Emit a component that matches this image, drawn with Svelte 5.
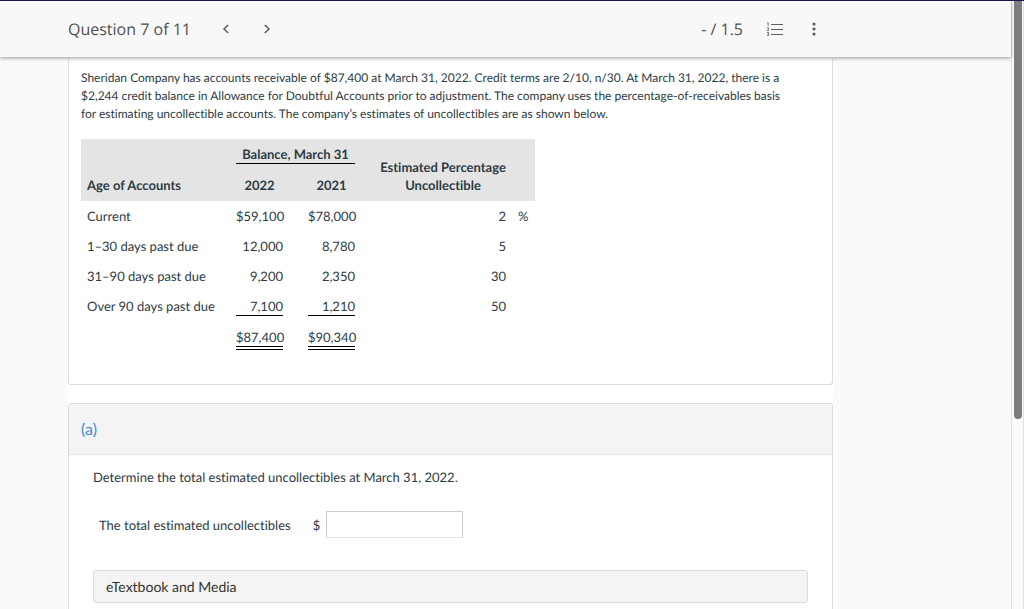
<script>
  const rows = [
    { label: 'Current', y2022: '$59,100', y2021: '$78,000', rate: '2', unit: '%' },
    { label: '1–30 days past due', y2022: '12,000', y2021: '8,780', rate: '5' },
    { label: '31–90 days past due', y2022: '9,200', y2021: '2,350', rate: '30' },
    { label: 'Over 90 days past due', y2022: '7,100', y2021: '1,210', rate: '50', rule: 'single' },
    { label: '', y2022: '$87,400', y2021: '$90,340', rate: '', rule: 'double' }
  ];
  let answer = $state('');
</script>

<div class="page">
  <div class="view">
    <header>
      <h1>Question 7 of 11</h1>
      <nav aria-label="Questions">
        <button type="button" aria-label="Previous question">
          <svg width="8" height="10" viewBox="0 0 8 10"><path d="M6.200 1 2 5l4.200 4" /></svg>
        </button>
        <button type="button" aria-label="Next question">
          <svg width="8" height="10" viewBox="0 0 8 10"><path d="M1.800 1 6 5 1.800 9" /></svg>
        </button>
      </nav>
      <span class="score">- / 1.5</span>
      <button class="list" type="button" aria-label="Question list">
        <svg width="18" height="14" viewBox="0 0 18 14">
          <path class="lines" d="M5 2.500h12M5 7.500h12M5 12.500h12" />
          <path class="marks" d="M1 .8h1.200V4M1 5.800h1.700v1.200L1.200 8.500h1.800M1 10.500h1.700v3H1M1.500 12h1.200" />
        </svg>
      </button>
      <button class="more" type="button" aria-label="More options">
        <svg width="4" height="14" viewBox="0 0 4 14">
          <circle cx="2" cy="2" r="1.600" /><circle cx="2" cy="7" r="1.600" /><circle cx="2" cy="12" r="1.600" />
        </svg>
      </button>
    </header>

    <main>
      <section class="question">
        <p class="intro">
          Sheridan Company has accounts receivable of $87,400 at March 31, 2022. Credit terms are 2/10, n/30. At March
          31, 2022, there is a<br />
          $2,244 credit balance in Allowance for Doubtful Accounts prior to adjustment. The company uses the
          percentage-of-receivables basis<br />
          for estimating uncollectible accounts. The company’s estimates of uncollectibles are as shown below.
        </p>
        <table>
          <colgroup>
            <col class="age" /><col class="first" /><col class="second" /><col class="rate" /><col class="unit" />
          </colgroup>
          <thead>
            <tr>
              <th class="left" rowspan="2">Age of Accounts</th>
              <th colspan="2"><span class="single">Balance, March 31</span></th>
              <th class="spaced" rowspan="2">Estimated Percentage Uncollectible</th>
              <th rowspan="2"></th>
            </tr>
            <tr>
              <th>2022</th>
              <th class="spaced">2021</th>
            </tr>
          </thead>
          <tbody>
            {#each rows as row}
              <tr>
                <td class="left">{row.label}</td>
                <td><span class={row.rule}>{row.y2022}</span></td>
                <td class="spaced"><span class={row.rule}>{row.y2021}</span></td>
                <td class="spaced">{row.rate}</td>
                <td class="left">{row.unit ?? ''}</td>
              </tr>
            {/each}
          </tbody>
        </table>
      </section>

      <section class="part">
        <h2>(a)</h2>
        <div class="body">
          <p>Determine the total estimated uncollectibles at March 31, 2022.</p>
          <div class="answer">
            <label for="total">The total estimated uncollectibles</label>
            <span class="currency">$</span>
            <input id="total" type="text" bind:value={answer} />
          </div>
          <button class="media" type="button">eTextbook and Media</button>
        </div>
      </section>
    </main>
  </div>
  <div class="scrollbar"><div class="thumb"></div></div>
</div>

<style>
  :global(body) {
    margin: 0;
    background: #fafafa;
  }
  .page {
    display: flex;
    height: 100vh;
    overflow: hidden;
    box-sizing: border-box;
    border-top: 1px solid #17184a;
    background: #fafafa;
    color: #2d3b45;
    font: 13px/18px Lato, sans-serif;
    font-variant-ligatures: none;
    text-rendering: geometricPrecision;
  }
  .view {
    flex: 1;
    min-width: 0;
  }
  button {
    display: flex;
    align-items: center;
    justify-content: center;
    padding: 0;
    border: 0;
    background: none;
    color: #5c5c5c;
    font: inherit;
    font-variant-ligatures: none;
    text-rendering: inherit;
    cursor: pointer;
  }
  svg {
    display: block;
    fill: none;
    stroke: currentColor;
    stroke-width: 1.5;
  }
  header {
    position: relative;
    display: flex;
    align-items: center;
    height: 56px;
    padding: 0 185px 0 68px;
    background: #f8f8f8;
    box-shadow: 0 1px 4px rgba(0, 0, 0, 0.4);
    color: #505050;
    font: 16px/24px 'Open Sans', sans-serif;
  }
  h1 {
    margin: 0;
    font: inherit;
  }
  nav {
    display: flex;
    gap: 17px;
    margin-left: 23px;
  }
  nav button {
    width: 24px;
    height: 24px;
  }
  .score {
    margin-left: auto;
  }
  .list {
    margin-left: 23px;
  }
  .more {
    width: 24px;
    height: 24px;
    margin-left: 18px;
  }
  .lines {
    stroke-width: 1;
  }
  .marks {
    stroke-width: 0.8;
  }
  circle {
    fill: currentColor;
    stroke: none;
  }
  main {
    margin: 0 178px 0 68px;
    background: #fff;
  }
  section {
    border: 1px solid #dcdcdc;
    border-radius: 3px;
    background: #fff;
  }
  .question {
    margin-bottom: 18px;
    padding: 12px 12px 28px;
    border-top: 0;
  }
  p {
    margin: 0;
  }
  .intro {
    font-size: 12px;
  }
  table {
    width: 454px;
    margin-top: 16px;
    border-collapse: collapse;
    table-layout: fixed;
  }
  .age {
    width: 149px;
  }
  .first {
    width: 59px;
  }
  .second {
    width: 72px;
  }
  .rate {
    width: 151px;
  }
  .unit {
    width: 23px;
  }
  thead {
    border-bottom: 1px solid #e4e4e4;
    background: #e4e4e4;
  }
  th,
  td {
    padding: 6px;
  }
  th {
    text-align: center;
    vertical-align: bottom;
  }
  td {
    text-align: right;
    vertical-align: top;
  }
  .left {
    text-align: left;
  }
  .spaced {
    padding-left: 19px;
  }
  .single {
    display: block;
    border-bottom: 1px solid #000;
  }
  .double {
    display: block;
    border-bottom: 4px double #000;
  }
  h2 {
    margin: 0;
    padding: 17px 12px 15px;
    border-bottom: 1px solid #e6e6e6;
    background: #f4f4f4;
    color: #3d8bd8;
    font: 16px/18px Lato, sans-serif;
  }
  .body {
    padding: 13px 24px 24px;
  }
  .answer {
    display: flex;
    align-items: center;
    margin: 25px 0 32px;
    padding-left: 6px;
  }
  .currency {
    margin: 0 6px 0 22px;
  }
  input {
    box-sizing: border-box;
    width: 137px;
    height: 27px;
    padding: 0 6px;
    border: 1px solid #c7cdd1;
    border-bottom-color: #e4e4e4;
    background: #fff;
    color: inherit;
    font: inherit;
  }
  .media {
    box-sizing: border-box;
    justify-content: flex-start;
    width: 100%;
    height: 33px;
    padding: 0 12px;
    border: 1px solid #dcdcdc;
    border-radius: 3px;
    background: #f4f4f4;
    color: #333;
    font-size: 14px;
  }
  .scrollbar {
    width: 8px;
    padding: 0 1px 0 2px;
    border: solid #e2e2e2;
    border-width: 0 1px 0 1px;
    background: #fafafa;
  }
  .thumb {
    height: 418px;
    border-radius: 0 0 4px 4px;
    background: #7d7d7d;
  }
</style>
